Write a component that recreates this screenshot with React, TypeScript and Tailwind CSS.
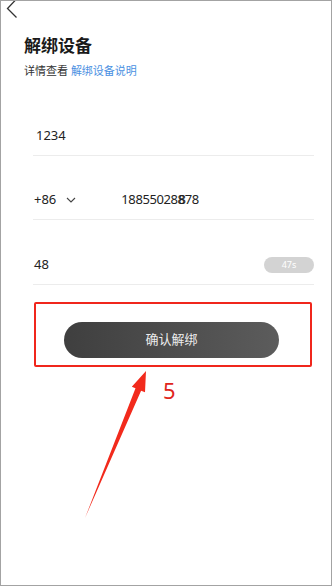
import React from "react";

const cjk = { fontFamily: '"Noto Sans", "Noto Sans CJK SC", sans-serif' };

export default function App() {
  return (
    <div
      className="relative w-[332px] h-[586px] border border-[#a3a3a3] bg-white overflow-hidden text-[#222]"
      style={cjk}
    >
      {/* header */}
      <div className="h-[16px] pl-[5px]">
        <svg width="12" height="17" viewBox="0 0 12 17" className="block">
          <path d="M10.5 -2 L1.5 7.5 L10.5 16.5" fill="none" stroke="#333" strokeWidth="1.3" />
        </svg>
      </div>

      <div className="pl-[23px]">
        <div className="mt-[17px] text-[17px] leading-[24px] font-bold text-[#1a1a1a]">解绑设备</div>
        <div className="mt-[5px] text-[11px] leading-[16px] text-[#333]">
          详情查看 <span className="text-[#4a90e2]">解绑设备说明</span>
        </div>
      </div>

      <div className="ml-[32px] w-[281px] mt-[37px]">
        <div className="h-[40px] flex items-center pl-[3px] border-b border-[#ececec] text-[13px]">1234</div>
        <div className="mt-[24px] h-[40px] flex items-center pl-[1px] border-b border-[#ececec] text-[13px]">
          <span>+86</span>
          <svg width="10" height="6" viewBox="0 0 10 6" className="ml-[10px]">
            <path d="M1 1 L5 5 L9 1" fill="none" stroke="#444" strokeWidth="1.1" />
          </svg>
          <span className="ml-[45px] tracking-[-0.4px]">
            18855028<span className="[text-shadow:1px_0_0_#222]">8</span>78
          </span>
        </div>
        <div className="mt-[25px] h-[40px] flex items-center justify-between pl-[1px] border-b border-[#ececec] text-[13px]">
          <span>48</span>
          <span className="w-[50px] h-[16px] rounded-full bg-[#d3d3d3] text-white text-[9px] leading-[16px] text-center">
            47s
          </span>
        </div>
      </div>

      <div className="ml-[33px] mt-[17px] w-[278px] h-[65px] border-2 border-[#f0261c] rounded-[2px] pt-[18px] pl-[28px]">
        <div className="w-[215px] h-[36px] rounded-full bg-gradient-to-r from-[#3f3f3f] to-[#5c5c5c] flex items-center justify-center text-[13px] text-[#ececec]">
          确认解绑
        </div>
      </div>

      {/* annotation */}
      <div
        className="absolute left-[162px] top-[374px] text-[22px] leading-[30px] text-[#e0251b]"
        style={{ fontFamily: '"Noto Sans", sans-serif' }}
      >
        5
      </div>
      <svg className="absolute left-0 top-0" width="332" height="587" viewBox="0 0 332 587">
        <polygon
          points="84,517 134.5,387.3 130.8,385.8 145,370 144,391.2 140.1,389.7"
          fill="#f22a1c"
        />
      </svg>
    </div>
  );
}
